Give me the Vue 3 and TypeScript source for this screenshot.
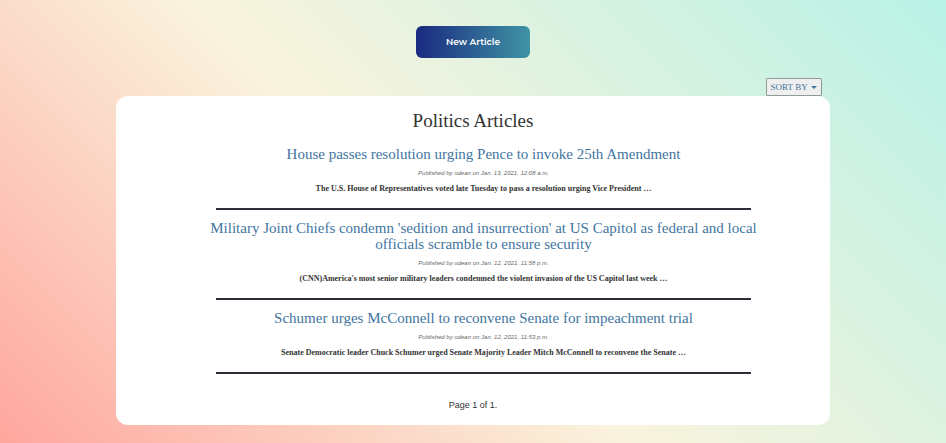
<script setup lang="ts">
interface Article {
  id: number
  title: string
  author: string
  published: string
  excerpt: string
}

const articles: Article[] = [
  {
    id: 3,
    title: 'House passes resolution urging Pence to invoke 25th Amendment',
    author: 'odean',
    published: 'Jan. 13, 2021, 12:08 a.m.',
    excerpt: 'The U.S. House of Representatives voted late Tuesday to pass a resolution urging Vice President …',
  },
  {
    id: 2,
    title: "Military Joint Chiefs condemn 'sedition and insurrection' at US Capitol as federal and local officials scramble to ensure security",
    author: 'odean',
    published: 'Jan. 12, 2021, 11:58 p.m.',
    excerpt: "(CNN)America's most senior military leaders condemned the violent invasion of the US Capitol last week …",
  },
  {
    id: 1,
    title: 'Schumer urges McConnell to reconvene Senate for impeachment trial',
    author: 'odean',
    published: 'Jan. 12, 2021, 11:53 p.m.',
    excerpt: 'Senate Democratic leader Chuck Schumer urged Senate Majority Leader Mitch McConnell to reconvene the Senate …',
  },
]
</script>

<template>
  <div class="page">
    <button type="button" class="new-article">New Article</button>
    <div class="toolbar">
      <button type="button" class="sort" aria-haspopup="menu">
        SORT BY
        <span class="caret"></span>
      </button>
    </div>
    <main class="card">
      <h1>Politics Articles</h1>
      <div class="list">
        <article v-for="article in articles" :key="article.id">
          <h2><a :href="`#article-${article.id}`">{{ article.title }}</a></h2>
          <p class="meta">Published by {{ article.author }} on {{ article.published }}</p>
          <p class="excerpt">{{ article.excerpt }}</p>
        </article>
      </div>
      <p class="pagination">Page 1 of 1.</p>
    </main>
  </div>
</template>

<style>
body {
  margin: 0;
}
</style>

<style scoped>
.page {
  box-sizing: border-box;
  min-height: 100vh;
  padding: 26px 12.3% 18px;
  display: flex;
  flex-direction: column;
  align-items: center;
  background: linear-gradient(45deg, #ffa69e 0%, #faf3dd 45%, #b8f2e6 100%);
  color: #333;
  font-family: "Liberation Serif", serif;
}

.new-article {
  padding: 0 30px;
  height: 32px;
  border: 0;
  border-radius: 6px;
  background: linear-gradient(to right, #1a2980, #3f94a4);
  color: #fff;
  font: 600 9px/32px Montserrat, Inter, sans-serif;
  cursor: pointer;
}

.toolbar {
  align-self: stretch;
  display: flex;
  justify-content: flex-end;
  margin-top: 20px;
  padding-right: 8px;
}

.sort {
  display: flex;
  align-items: center;
  gap: 3px;
  padding: 0 4px;
  border: 1px solid #8f9a98;
  border-radius: 1px;
  background: #efefef;
  color: #42759f;
  font: 9px/16px "Liberation Serif", serif;
  cursor: pointer;
}

.caret {
  border-top: 3px solid currentColor;
  border-left: 3px solid transparent;
  border-right: 3px solid transparent;
}

.card {
  align-self: stretch;
  box-sizing: border-box;
  padding: 14px 0 13px;
  border-radius: 12px;
  background: #fff;
  text-align: center;
}

h1 {
  margin: 0;
  font-size: 19px;
  font-weight: 400;
  line-height: 21px;
}

.list {
  padding: 15px 0 0 21px;
  display: flex;
  flex-direction: column;
  align-items: center;
  gap: 10px;
}

article {
  width: 83%;
  display: flex;
  flex-direction: column;
  align-items: center;
}

article::after {
  content: "";
  width: 93%;
  height: 2px;
  margin-top: 14px;
  background: #2e2e38;
}

h2 {
  margin: 0;
  font-size: 15px;
  font-weight: 400;
  line-height: 16px;
}

h2 a {
  color: #42759f;
  text-decoration: none;
}

.meta {
  margin: 6px 0 0;
  color: #666;
  font: italic 6px/10px "Liberation Sans", sans-serif;
}

.excerpt {
  margin: 6px 0 0;
  font-size: 8px;
  font-weight: 700;
  line-height: 10px;
}

.pagination {
  margin: 25px 0 0;
  font: 9px/13px "Liberation Sans", sans-serif;
}
</style>
